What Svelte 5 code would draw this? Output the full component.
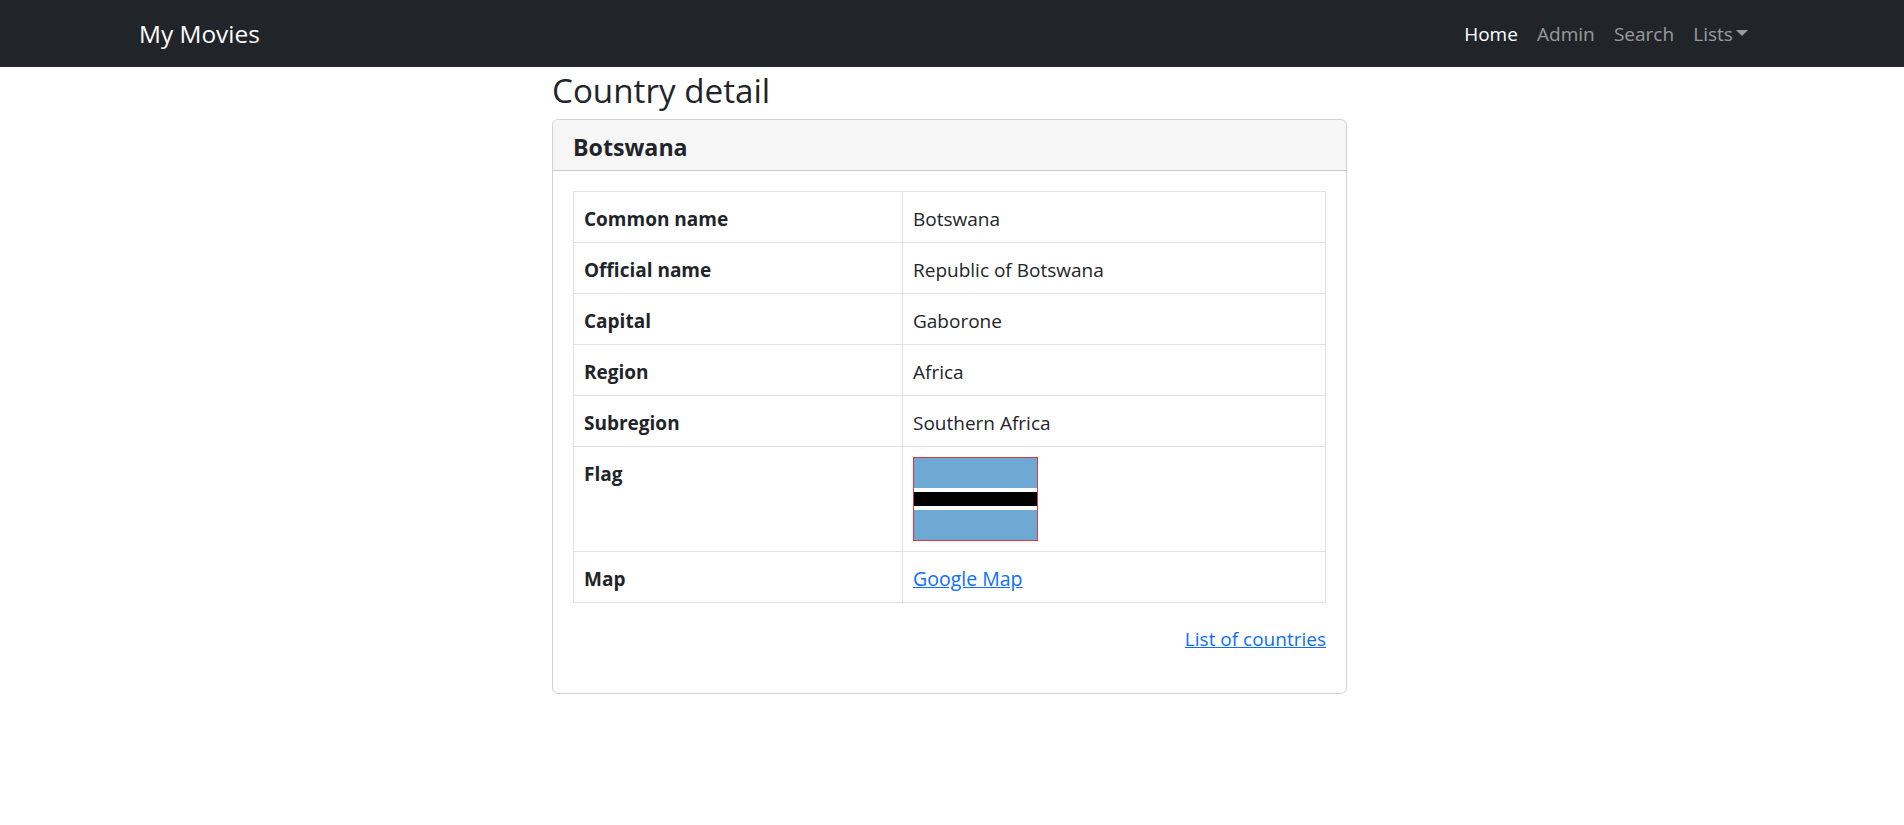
<script>
  const rows = [
    ['Common name', 'Botswana'],
    ['Official name', 'Republic of Botswana'],
    ['Capital', 'Gaborone'],
    ['Region', 'Africa'],
    ['Subregion', 'Southern Africa']
  ];
</script>

<nav class="navbar">
  <a class="brand" href="#top">My Movies</a>
  <ul class="links">
    <li><a class="active" href="#top">Home</a></li>
    <li><a href="#top">Admin</a></li>
    <li><a href="#top">Search</a></li>
    <li><a class="toggle" href="#top">Lists</a></li>
  </ul>
</nav>

<main class="container">
  <h3>Country detail</h3>
  <section class="card">
    <header class="card-header">Botswana</header>
    <div class="card-body">
      <table>
        <tbody>
          {#each rows as r}
            <tr><th>{r[0]}</th><td>{r[1]}</td></tr>
          {/each}
          <tr>
            <th>Flag</th>
            <td class="flag-cell">
              <svg class="flag" width="125" height="84" viewBox="0 0 125 84" preserveAspectRatio="none">
                <rect width="125" height="84" fill="#6DA9D2"/>
                <rect y="31" width="125" height="22" fill="#fff"/>
                <rect y="35" width="125" height="14" fill="#000"/>
              </svg>
            </td>
          </tr>
          <tr><th>Map</th><td><a class="map" href="#top">Google Map</a></td></tr>
        </tbody>
      </table>
      <p class="back"><a href="#top">List of countries</a></p>
    </div>
  </section>
</main>

<style>
  :global(body) {
    margin: 0;
    font-family: "Open Sans", "Noto Sans", sans-serif;
    font-size: 19px;
    line-height: 1.5;
    color: #212529;
    background: #fff;
  }
  .navbar {
    background: #212529; height: 67px; box-sizing: border-box;
    padding: 0 146px 0 139px;
    display: flex; justify-content: space-between; align-items: center;
  }
  .brand { color: #fff; font-size: 24.4px; text-decoration: none; padding-top: 1px; }
  .links { display: flex; list-style: none; margin: 0; padding: 1px 0 0; }
  .links a { display: block; padding: 8px 9.6px; color: rgba(255,255,255,.55); text-decoration: none; }
  .links a.active { color: #fff; }
  .toggle::after {
    content: ""; display: inline-block; margin-left: 3.5px; vertical-align: 4.6px;
    border-top: 6px solid; border-left: 6px solid transparent; border-right: 6px solid transparent;
  }
  .container { padding: 0 557px 0 552px; }
  h3 { font-size: 33.2px; font-weight: 400; line-height: 41px; margin: 0 0 8px; padding-top: 3px; }
  .card { border: 1px solid rgba(0,0,0,.175); border-radius: 6px; }
  .card-header {
    background: rgba(33,37,41,.04); border-bottom: 1px solid rgba(0,0,0,.175);
    padding: 4px 20px 0; font-weight: 700; font-size: 23.2px; line-height: 46px; border-radius: 5px 5px 0 0;
  }
  .card-body { padding: 20px; }
  table { width: 100%; border-collapse: collapse; }
  th, td { border: 1px solid #dee2e6; padding: 12px 10px 8px; text-align: left; vertical-align: top; line-height: 30px; }
  th { width: 308px; font-weight: 700; }
  .flag-cell { padding: 10px; }
  td a, .back a { color: #0d6efd; }
  .map { font-size: 19.5px; }
  .flag { display: block; outline: 1px solid #dc3545; outline-offset: -1px; }
  .back { text-align: right; margin: 22px 0 19px; }
</style>
